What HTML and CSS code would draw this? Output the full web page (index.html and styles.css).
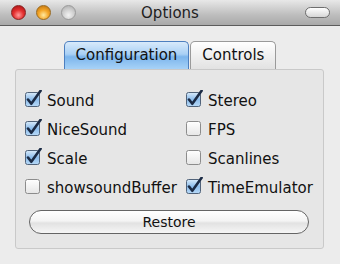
FILE: index.html
```html
<!DOCTYPE html>
<html lang="en">
<head>
    <meta charset="utf-8">
    <title>Options</title>
    <link rel="stylesheet" href="styles.css">
</head>
<body>
    <svg class="defs" width="0" height="0">
        <defs>
            <linearGradient id="boxOn" x1="0" y1="0" x2="0" y2="1">
                <stop offset="0" stop-color="#d9ebfa"/>
                <stop offset="0.5" stop-color="#8dbdec"/>
                <stop offset="1" stop-color="#b7d9f7"/>
            </linearGradient>
            <linearGradient id="boxOff" x1="0" y1="0" x2="0" y2="1">
                <stop offset="0" stop-color="#ffffff"/>
                <stop offset="1" stop-color="#e6e6e6"/>
            </linearGradient>
        </defs>
    </svg>

    <div class="titlebar">
        <div class="lights">
            <span class="light red"></span>
            <span class="light orange"></span>
            <span class="light gray"></span>
        </div>
        <div class="title">Options</div>
        <div class="pillbox"><span class="pill"></span></div>
    </div>

    <div class="content">
        <div class="tabs">
            <span class="tab active">Configuration</span>
            <span class="tab">Controls</span>
        </div>
        <div class="panel">
            <div class="options">
                <label class="opt"><svg class="check" width="17" height="17" viewBox="0 0 17 17"><rect x="0.5" y="2.5" width="14" height="14" rx="2" fill="url(#boxOn)" stroke="#51637a"/><path d="M3 9.5 L6.3 13.8 L15.6 0.8" fill="none" stroke="#1b2b45" stroke-width="2.6" stroke-linecap="round" stroke-linejoin="round"/></svg>Sound</label>
                <label class="opt"><svg class="check" width="17" height="17" viewBox="0 0 17 17"><rect x="0.5" y="2.5" width="14" height="14" rx="2" fill="url(#boxOn)" stroke="#51637a"/><path d="M3 9.5 L6.3 13.8 L15.6 0.8" fill="none" stroke="#1b2b45" stroke-width="2.6" stroke-linecap="round" stroke-linejoin="round"/></svg>Stereo</label>
                <label class="opt"><svg class="check" width="17" height="17" viewBox="0 0 17 17"><rect x="0.5" y="2.5" width="14" height="14" rx="2" fill="url(#boxOn)" stroke="#51637a"/><path d="M3 9.5 L6.3 13.8 L15.6 0.8" fill="none" stroke="#1b2b45" stroke-width="2.6" stroke-linecap="round" stroke-linejoin="round"/></svg>NiceSound</label>
                <label class="opt"><svg class="check" width="17" height="17" viewBox="0 0 17 17"><rect x="0.5" y="2.5" width="14" height="14" rx="2" fill="url(#boxOff)" stroke="#8c8c8c"/></svg>FPS</label>
                <label class="opt"><svg class="check" width="17" height="17" viewBox="0 0 17 17"><rect x="0.5" y="2.5" width="14" height="14" rx="2" fill="url(#boxOn)" stroke="#51637a"/><path d="M3 9.5 L6.3 13.8 L15.6 0.8" fill="none" stroke="#1b2b45" stroke-width="2.6" stroke-linecap="round" stroke-linejoin="round"/></svg>Scale</label>
                <label class="opt"><svg class="check" width="17" height="17" viewBox="0 0 17 17"><rect x="0.5" y="2.5" width="14" height="14" rx="2" fill="url(#boxOff)" stroke="#8c8c8c"/></svg>Scanlines</label>
                <label class="opt"><svg class="check" width="17" height="17" viewBox="0 0 17 17"><rect x="0.5" y="2.5" width="14" height="14" rx="2" fill="url(#boxOff)" stroke="#8c8c8c"/></svg>showsoundBuffer</label>
                <label class="opt"><svg class="check" width="17" height="17" viewBox="0 0 17 17"><rect x="0.5" y="2.5" width="14" height="14" rx="2" fill="url(#boxOn)" stroke="#51637a"/><path d="M3 9.5 L6.3 13.8 L15.6 0.8" fill="none" stroke="#1b2b45" stroke-width="2.6" stroke-linecap="round" stroke-linejoin="round"/></svg>TimeEmulator</label>
            </div>
            <button class="restore">Restore</button>
        </div>
    </div>
</body>
</html>
```

FILE: styles.css
```css
body {
    margin: 0;
    background: #ececec;
    font-family: "DejaVu Sans", sans-serif;
    font-size: 15px;
    color: #111;
}

.defs {
    position: absolute;
}

.titlebar {
    display: grid;
    grid-template-columns: 1fr auto 1fr;
    align-items: center;
    height: 25px;
    background: linear-gradient(#e8e8e8, #bdbdbd 60%, #a9a9a9);
    border-bottom: 1px solid #5c5c5c;
}

    .titlebar .lights {
        display: flex;
        gap: 10px;
        padding-left: 11px;
    }

    .titlebar .light {
        width: 15px;
        height: 15px;
        border-radius: 50%;
        box-sizing: border-box;
    }

    .titlebar .red {
        background: radial-gradient(circle at 50% 70%, #ff9c9c, #e43030 45%, #a01010);
        border: 1px solid #8a2020;
    }

    .titlebar .orange {
        background: radial-gradient(circle at 50% 70%, #ffe9a0, #f4a628 45%, #b86a08);
        border: 1px solid #9a6a20;
    }

    .titlebar .gray {
        background: radial-gradient(circle at 50% 70%, #f2f2f2, #cfcfcf 50%, #a8a8a8);
        border: 1px solid #9a9a9a;
    }

    .titlebar .title {
        color: #1e1e1e;
        padding-top: 1px;
    }

    .titlebar .pillbox {
        display: flex;
        justify-content: flex-end;
        padding-right: 10px;
    }

    .titlebar .pill {
        width: 25px;
        height: 11px;
        box-sizing: border-box;
        border: 1px solid #6e6e6e;
        border-radius: 6px;
        background: linear-gradient(#ffffff, #d6d6d6);
    }

.content {
    padding: 15px 16px 0 15px;
}

.tabs {
    display: flex;
    justify-content: center;
    padding-left: 1px;
}

.tab {
    height: 28px;
    line-height: 27px;
    padding: 0 11px;
    box-sizing: border-box;
    border: 1px solid #9a9a9a;
    border-bottom: none;
    border-radius: 5px 5px 0 0;
    background: linear-gradient(#ffffff, #f0f0f0 50%, #e2e2e2);
}

    .tab.active {
        border-color: #4d7fbf;
        background: linear-gradient(#d8eafb, #a9d0f5 45%, #7cb5ec 55%, #a7d2f7);
        margin-right: 1px;
    }

.panel {
    border: 1px solid #c9c9c9;
    border-radius: 3px;
    background: #e6e6e6;
    padding: 16px 9px 14px 9px;
}

.options {
    display: grid;
    grid-template-columns: 161px 1fr;
    grid-auto-rows: 29px;
}

.opt {
    display: flex;
    align-items: center;
}

    .opt .check {
        margin-right: 5px;
        margin-top: -4px;
        flex-shrink: 0;
    }

.restore {
    display: block;
    width: 280px;
    height: 24px;
    margin: 8px 0 0 4px;
    border: 1px solid #656565;
    border-radius: 12px;
    background: linear-gradient(#ffffff, #f4f4f4 45%, #e2e2e2 55%, #f6f6f6);
    font-family: "DejaVu Sans", sans-serif;
    font-size: 14px;
    color: #111;
    padding: 0;
}
```
